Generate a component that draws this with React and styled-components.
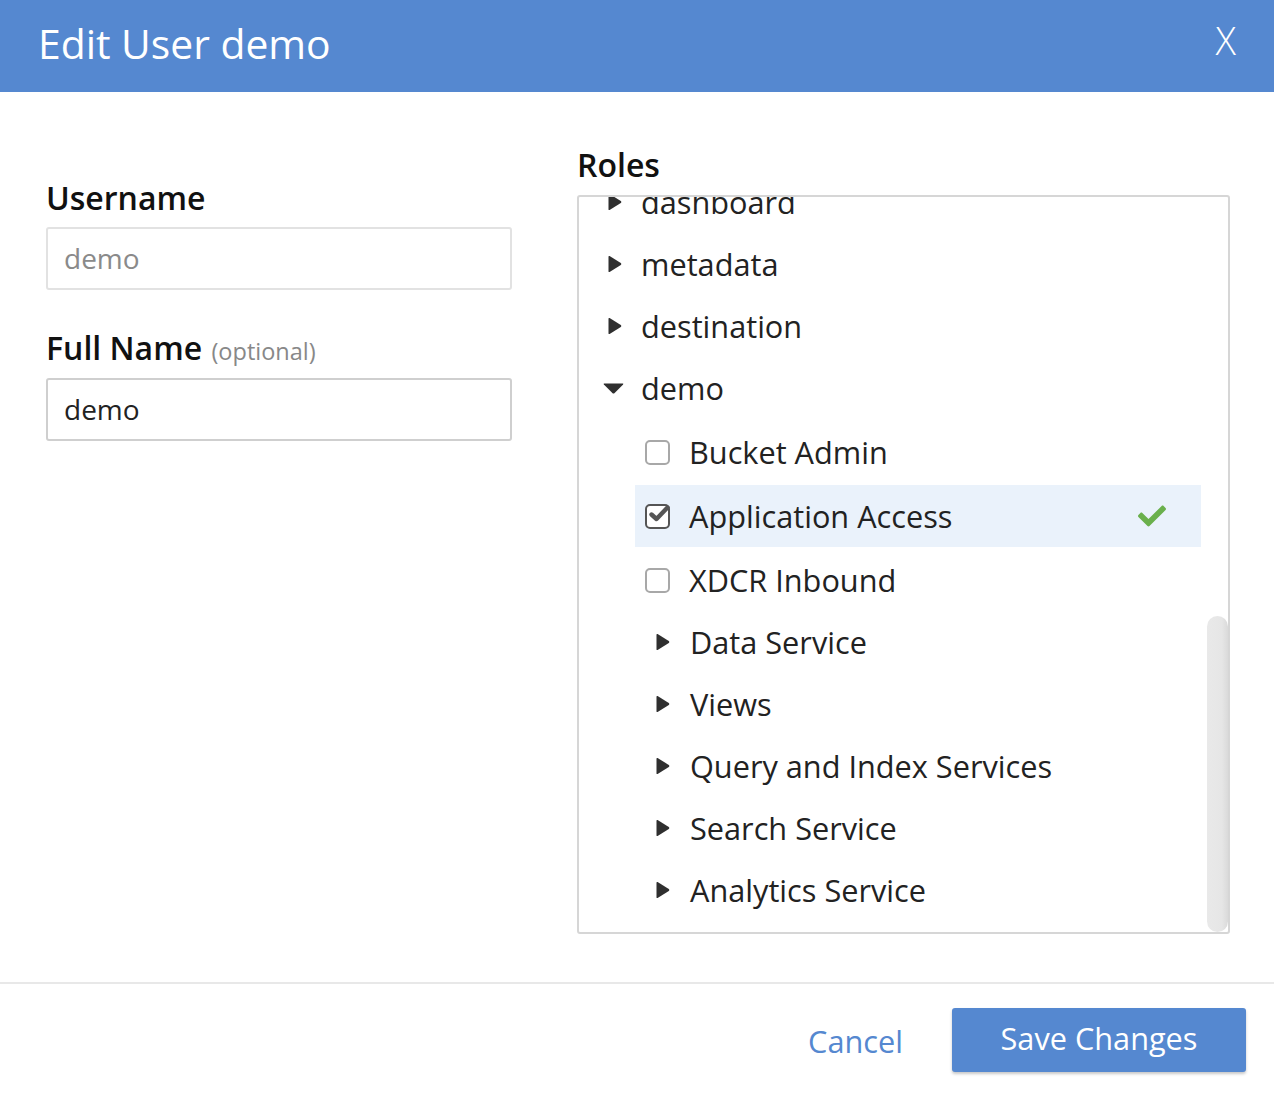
import React from "react";
import styled, { createGlobalStyle } from "styled-components";
import { FaCheck } from "react-icons/fa";

const Global = createGlobalStyle`
  html, body { margin: 0; padding: 0; background: #fff; }
  body { font-family: "Open Sans", "Noto Sans", sans-serif; color: #222; }
  * { box-sizing: border-box; }
`;

const Dialog = styled.div`
  width: 1274px;
  height: 1096px;
  display: flex;
  flex-direction: column;
  background: #fff;
`;

const Header = styled.header`
  height: 92px;
  flex: none;
  background: #5588d0;
  display: flex;
  align-items: center;
  justify-content: space-between;
  padding: 0 38px 6px 38px;
`;

const Title = styled.h1`
  margin: 0;
  font-size: 40.8px;
  font-weight: 400;
  color: #fff;
`;

const Close = styled.button`
  border: 0;
  background: none;
  padding: 0;
  color: #fff;
  font-family: "Open Sans", sans-serif;
  font-size: 38px;
  font-weight: 300;
  line-height: 1;
  margin-bottom: 6px;
`;

const Body = styled.main`
  flex: 1;
  display: flex;
  gap: 65px;
  padding: 52px 44px 0 46px;
`;

const LeftCol = styled.section`
  width: 466px;
  flex: none;
  margin-top: 33px;
  display: flex;
  flex-direction: column;
`;

const RightCol = styled.section`
  flex: 1;
  display: flex;
  flex-direction: column;
`;

const Label = styled.label`
  font-size: 32px;
  font-weight: 600;
  line-height: 42px;
  color: #111;
  margin-bottom: ${(p) => p.$mb ?? 8}px;
`;

const Optional = styled.span`
  font-size: 23.5px;
  font-weight: 400;
  color: #888;
  margin-left: 1px;
`;

const Input = styled.div`
  height: 63px;
  border: 2px solid ${(p) => (p.$disabled ? "#e2e2e2" : "#cfcfcf")};
  border-radius: 3px;
  display: flex;
  align-items: center;
  padding: 0 16px 2px;
  font-size: 28px;
  color: ${(p) => (p.$disabled ? "#8a8a8a" : "#222")};
  margin-bottom: ${(p) => p.$mb || 0}px;
`;

const RolesBox = styled.div`
  height: 739px;
  border: 2px solid #d6d6d6;
  border-radius: 3px;
  overflow: hidden;
  display: flex;
`;

const List = styled.div`
  flex: 1;
  min-width: 0;
  margin-top: -26px;
`;

const ScrollTrack = styled.div`
  width: 22px;
  flex: none;
  padding-left: 1px;
`;

const Thumb = styled.div`
  width: 21px;
  margin-top: ${(p) => p.$top}px;
  height: ${(p) => p.$height}px;
  border-radius: 11px;
  background: linear-gradient(to right, #e9e9e9, #e6e6e6 70%, #dadada);
`;

const TopRow = styled.div`
  height: 62px;
  display: flex;
  align-items: center;
  padding-left: 29px;
  font-size: 30.7px;
  color: #222;
  white-space: nowrap;
`;

const SubRow = styled.div`
  height: 62px;
  margin: ${(p) => (p.$check ? "2px 5px 0 56px" : "0 5px 0 56px")};
  display: flex;
  align-items: center;
  padding: 0 35px 0 ${(p) => (p.$check ? 10 : 21)}px;
  font-size: 30.7px;
  color: #222;
  white-space: nowrap;
  background: ${(p) => (p.$active ? "#eaf2fb" : "transparent")};
`;

const RowText = styled.span`
  flex: 1;
  line-height: 1;
`;

const CaretSvg = styled.svg`
  flex: none;
  margin-right: ${(p) => p.$mr}px;
  margin-left: ${(p) => p.$ml || 0}px;
`;

const Box = styled.span`
  flex: none;
  width: 25px;
  height: 25px;
  border: 2px solid ${(p) => (p.$checked ? "#555" : "#a8a8a8")};
  border-radius: 5px;
  margin-right: 19px;
  position: relative;
  background: #fff;
`;

const Tick = styled.svg`
  position: absolute;
  left: 1px;
  top: -3px;
`;

const Done = styled(FaCheck)`
  color: #6ab04c;
  font-size: 28px;
  flex: none;
`;

const Footer = styled.footer`
  height: 114px;
  flex: none;
  border-top: 2px solid #e8e8e8;
  display: flex;
  align-items: center;
  justify-content: flex-end;
  gap: 49px;
  padding: 0 28px 0 0;
`;

const CancelBtn = styled.button`
  border: 0;
  background: none;
  padding: 0;
  font-family: "Open Sans", sans-serif;
  font-size: 30.7px;
  color: #5588d0;
  margin-top: 2px;
`;

const SaveBtn = styled.button`
  width: 294px;
  height: 64px;
  border: 0;
  border-radius: 3px;
  background: #5588d0;
  color: #fff;
  font-family: "Open Sans", sans-serif;
  font-size: 30.7px;
  box-shadow: 0 2px 3px rgba(0, 0, 0, 0.22);
  padding: 0 0 4px;
`;

const RightCaret = ({ ml, mr }) => (
  <CaretSvg $ml={ml} $mr={mr} width="14" height="18" viewBox="0 0 14 18">
    <path d="M1.6 1.1 L12.8 7.9 Q13.9 9 12.8 10.1 L1.6 16.9 Q0.5 17.4 0.5 16.2 L0.5 1.8 Q0.5 0.6 1.6 1.1 Z" fill="#2f2f2f" />
  </CaretSvg>
);

const DownCaret = ({ mr }) => (
  <CaretSvg $ml={-5} $mr={mr} width="21" height="11" viewBox="0 0 21 11">
    <path d="M1.2 0.5 L19.8 0.5 Q20.8 0.6 20.1 1.5 L11.4 10.2 Q10.5 11 9.6 10.2 L0.9 1.5 Q0.2 0.6 1.2 0.5 Z" fill="#2f2f2f" />
  </CaretSvg>
);

const topLevel = ["dashboard", "metadata", "destination"];

const checks = [
  { name: "Bucket Admin" },
  { name: "Application Access", checked: true },
  { name: "XDCR Inbound" },
];

const services = ["Data Service", "Views", "Query and Index Services", "Search Service", "Analytics Service"];

export default function App() {
  return (
    <>
      <Global />
      <Dialog>
        <Header>
          <Title>Edit User demo</Title>
          <Close>X</Close>
        </Header>
        <Body>
          <LeftCol>
            <Label>Username</Label>
            <Input $disabled $mb={37}>demo</Input>
            <Label $mb={6}>
              Full Name <Optional>(optional)</Optional>
            </Label>
            <Input>demo</Input>
          </LeftCol>
          <RightCol>
            <Label $mb={9}>Roles</Label>
            <RolesBox>
              <List>
                {topLevel.map((n) => (
                  <TopRow key={n}>
                    <RightCaret mr={19} />
                    <RowText>{n}</RowText>
                  </TopRow>
                ))}
                <TopRow>
                  <DownCaret mr={17} />
                  <RowText>demo</RowText>
                </TopRow>
                {checks.map((c) => (
                  <SubRow key={c.name} $check $active={c.checked}>
                    <Box $checked={c.checked}>
                      {c.checked && (
                        <Tick width="24" height="22" viewBox="0 0 24 22">
                          <path d="M3.5 11.5 L8.5 16 L19.5 4.5" fill="none" stroke="#555" strokeWidth="4.4" strokeLinecap="round" strokeLinejoin="round" />
                        </Tick>
                      )}
                    </Box>
                    <RowText>{c.name}</RowText>
                    {c.checked && <Done />}
                  </SubRow>
                ))}
                {services.map((s) => (
                  <SubRow key={s}>
                    <RightCaret mr={20} />
                    <RowText>{s}</RowText>
                  </SubRow>
                ))}
              </List>
              <ScrollTrack>
                <Thumb $top={419} $height={316} />
              </ScrollTrack>
            </RolesBox>
          </RightCol>
        </Body>
        <Footer>
          <CancelBtn>Cancel</CancelBtn>
          <SaveBtn>Save Changes</SaveBtn>
        </Footer>
      </Dialog>
    </>
  );
}
